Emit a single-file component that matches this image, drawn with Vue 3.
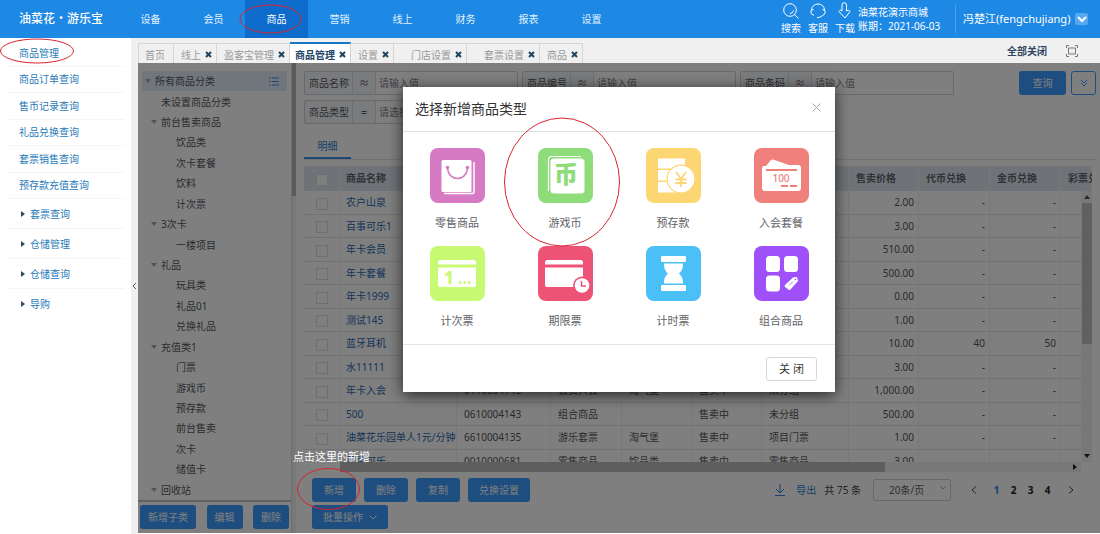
<script setup>
import { ref } from 'vue'

const navItems = ['设备', '会员', '商品', '营销', '线上', '财务', '报表', '设置']
const menuLinks = ['商品管理', '商品订单查询', '售币记录查询', '礼品兑换查询', '套票销售查询', '预存款充值查询']
const menuGroups = ['套票查询', '仓储管理', '仓储查询', '导购']

const tabs = [
  { name: '首页', fixed: true },
  { name: '线上' },
  { name: '盈客宝管理' },
  { name: '商品管理', active: true },
  { name: '设置' },
  { name: '门店设置', wide: true },
  { name: '套票设置', wide: true },
  { name: '商品' },
]

const tree = [
  { name: '所有商品分类', level: 0, open: true },
  { name: '未设置商品分类', level: 1 },
  { name: '前台售卖商品', level: 1, open: true },
  { name: '饮品类', level: 2 },
  { name: '次卡套餐', level: 2 },
  { name: '饮料', level: 2 },
  { name: '计次票', level: 2 },
  { name: '3次卡', level: 1, open: true },
  { name: '一楼项目', level: 2 },
  { name: '礼品', level: 1, open: true },
  { name: '玩具类', level: 2 },
  { name: '礼品01', level: 2 },
  { name: '兑换礼品', level: 2 },
  { name: '充值类1', level: 1, open: true },
  { name: '门票', level: 2 },
  { name: '游戏币', level: 2 },
  { name: '预存款', level: 2 },
  { name: '前台售卖', level: 2 },
  { name: '次卡', level: 2 },
  { name: '储值卡', level: 2 },
  { name: '回收站', level: 1, open: true },
]

const filters = [
  { id: 'f-name', label: '商品名称', op: '≈', hint: '请输入值' },
  { id: 'f-code', label: '商品编号', op: '≈', hint: '请输入值' },
  { id: 'f-bar', label: '商品条码', op: '≈', hint: '请输入值' },
  { id: 'f-type', label: '商品类型', op: '=', hint: '请选择' },
]

const columns = ['商品名称', '商品编号', '商品类型', '商品分类', '状态', '项目分组', '售卖价格', '代币兑换', '金币兑换', '彩票兑换']
const rows = [
  ['农户山泉', '0610004151', '零售商品', '饮品类', '售卖中', '未分组', '2.00', '-', '-'],
  ['百事可乐1', '0610004150', '零售商品', '饮品类', '售卖中', '未分组', '3.00', '-', '-'],
  ['年卡会员', '0610004149', '会员入会', '淘气堡', '售卖中', '未分组', '510.00', '-', '-'],
  ['年卡套餐', '0610004148', '会员入会', '淘气堡', '售卖中', '未分组', '500.00', '-', '-'],
  ['年卡1999', '0610004147', '会员入会', '淘气堡', '售卖中', '未分组', '0.00', '-', '-'],
  ['测试145', '0610004146', '零售商品', '饮品类', '售卖中', '未分组', '1.00', '-', '-'],
  ['蓝牙耳机', '0610004145', '零售商品', '礼品', '售卖中', '未分组', '10.00', '40', '50'],
  ['水11111', '0610004144', '零售商品', '饮品类', '售卖中', '未分组', '3.00', '-', '-'],
  ['年卡入会', '0110004145', '会员入会', '淘气堡', '售卖中', '未分组', '1,000.00', '-', '-'],
  ['500', '0610004143', '组合商品', '', '售卖中', '未分组', '500.00', '-', '-'],
  ['油菜花乐园单人1元/分钟', '6610004135', '游乐套票', '淘气堡', '售卖中', '项目门票', '1.00', '-', '-'],
  ['百事可乐', '0010000681', '零售商品', '饮品类', '售卖中', '零售商品', '3.00', '-', '-'],
]

const types = [
  { key: 'retail', name: '零售商品' },
  { key: 'coin', name: '游戏币' },
  { key: 'deposit', name: '预存款' },
  { key: 'member', name: '入会套餐' },
  { key: 'count', name: '计次票' },
  { key: 'period', name: '期限票' },
  { key: 'timer', name: '计时票' },
  { key: 'combo', name: '组合商品' },
]
const open = ref(true)
</script>

<template>
  <div class="page">
    <header class="top">
      <h1 class="brand">油菜花・游乐宝</h1>
      <nav class="nav">
        <a v-for="n in navItems" :key="n" href="#" :class="{ on: n === '商品' }">{{ n }}</a>
      </nav>
      <div class="tools">
        <button class="tool">
          <svg width="18" height="18" viewBox="0 0 18 18"><circle cx="8" cy="8" r="6.3" /><path d="M12.500 12.500l4 4M8 11.500a4 4 0 0 0 3.500-3" /></svg>
          <span>搜索</span>
        </button>
        <button class="tool">
          <svg width="18" height="18" viewBox="0 0 18 18"><path d="M2.500 8a6.500 6 0 0 1 13 0M4.500 7.500L2 8.500v3l3 2M13.500 7.500l2.500 1v3l-3 2.500-3 1.500H8" /></svg>
          <span>客服</span>
        </button>
        <button class="tool">
          <svg width="18" height="18" viewBox="0 0 18 18"><path d="M6 9V3a2 2 0 0 1 4.500 0v6l2-1 1.500 1.500-5 6.500-6-6.500L4.500 8z" /></svg>
          <span>下载</span>
        </button>
      </div>
      <div class="store"><span>油菜花演示商城</span><span>账期：2021-06-03</span></div>
      <div class="user">
        <span>冯楚江(fengchujiang)</span>
        <button class="drop" aria-label="用户菜单"><svg width="10" height="8" viewBox="0 0 10 8"><path d="M1 2l4 4 4-4" /></svg></button>
      </div>
    </header>

    <div class="body">
      <aside class="side">
        <ul class="links">
          <li v-for="m in menuLinks" :key="m"><a href="#">{{ m }}</a></li>
        </ul>
        <ul class="groups">
          <li v-for="m in menuGroups" :key="m"><i></i><a href="#">{{ m }}</a></li>
        </ul>
      </aside>
      <button class="fold" aria-label="收起菜单"><svg width="5" height="8" viewBox="0 0 5 8"><path d="M4 1L1 4l3 3" /></svg></button>

      <main class="main">
        <div class="tabbar">
          <div v-for="(t, i) in tabs" :key="i" class="tab" :class="{ on: t.active, wide: t.wide, fixed: t.fixed }">
            <a href="#">{{ t.name }}</a>
            <button v-if="!t.fixed" aria-label="关闭标签"><svg width="7" height="7" viewBox="0 0 7 7"><path d="M1 1l5 5M6 1L1 6" /></svg></button>
          </div>
          <button class="closeall">全部关闭</button>
          <button class="full" aria-label="全屏"><svg width="12" height="12" viewBox="0 0 12 12"><path d="M.5 3V.5H3M9 .5h2.500V3M11.500 9v2.500H9M3 11.500H.5V9M2.500 3h7v6h-7z" /></svg></button>
        </div>

        <div class="work">
          <section class="cats">
            <ul class="tree">
              <li v-for="(t, i) in tree" :key="i" :class="['lv' + t.level]">
                <i :class="{ caret: t.open }"></i><span>{{ t.name }}</span>
                <svg v-if="i === 0" class="list" width="10" height="9" viewBox="0 0 10 9"><path d="M0 1h1.500M3 1h7M0 4.500h1.500M3 4.500h7M0 8h1.500M3 8h7" /></svg>
              </li>
            </ul>
            <div class="catfoot">
              <button class="btn">新增子类</button><button class="btn">编辑</button><button class="btn">删除</button>
            </div>
          </section>
          <div class="rail"><i></i></div>

          <section class="goods">
            <div class="filters">
              <div class="fields">
                <div v-for="f in filters" :key="f.id" class="field">
                  <label :for="f.id">{{ f.label }}</label><span class="op">{{ f.op }}</span>
                  <input :id="f.id" type="text" :placeholder="f.hint" />
                </div>
              </div>
              <button class="btn query">查询</button>
              <button class="more" aria-label="更多条件"><svg width="8" height="8" viewBox="0 0 8 8"><path d="M1 1l3 3 3-3M1 4l3 3 3-3" /></svg></button>
            </div>

            <div class="subtabs"><a href="#">明细</a></div>

            <div class="grid">
              <div class="scroll">
                <table>
                  <colgroup>
                    <col class="c36" /><col class="c117" /><col class="c94" /><col class="c71" /><col class="c70" /><col class="c70" />
                    <col class="c87" /><col class="c70" /><col class="c71" /><col class="c71" /><col />
                  </colgroup>
                  <thead>
                    <tr>
                      <th><input type="checkbox" aria-label="全选" /></th>
                      <th v-for="c in columns" :key="c">{{ c }}</th>
                    </tr>
                  </thead>
                  <tbody>
                    <tr v-for="r in rows" :key="r[1]">
                      <td><input type="checkbox" :aria-label="r[0]" /></td>
                      <td v-for="(v, i) in r" :key="i" :class="{ link: i === 0, num: i > 5 }"><a v-if="i === 0" href="#">{{ v }}</a><template v-else>{{ v }}</template></td>
                      <td></td>
                    </tr>
                  </tbody>
                </table>
              </div>
              <div class="vbar"><i class="up"></i><b></b><i class="down"></i></div>
              <div class="hbar"><b></b><i></i></div>
            </div>

            <div class="foot">
              <div class="acts">
                <button class="btn">新增</button><button class="btn">删除</button><button class="btn">复制</button><button class="btn">兑换设置</button>
                <button class="btn batch">批量操作 <svg width="8" height="5" viewBox="0 0 8 5"><path d="M.5.5L4 4 7.500.5" /></svg></button>
              </div>
              <div class="pager">
                <a href="#" class="export"><svg width="10" height="12" viewBox="0 0 10 12"><path d="M5 0v9M1 5l4 4 4-4M0 11.500h10" /></svg>导出</a>
                <span class="total">共 75 条</span>
                <div class="size"><select aria-label="每页条数"><option>20条/页</option></select><svg width="6" height="4" viewBox="0 0 6 4"><path d="M.5.5L3 3 5.500.5" /></svg></div>
                <button class="arrow" aria-label="上一页"><svg width="6" height="8" viewBox="0 0 6 8"><path d="M5 .5L1 4l4 3.500" /></svg></button>
                <button v-for="p in 4" :key="p" class="num" :class="{ on: p === 1 }">{{ p }}</button>
                <button class="arrow" aria-label="下一页"><svg width="6" height="8" viewBox="0 0 6 8"><path d="M1 .5L5 4 1 7.500" /></svg></button>
              </div>
            </div>
          </section>

          <div v-if="open" class="mask">
            <div class="modal" role="dialog" aria-labelledby="dlg-title">
              <div class="mhead">
                <h2 id="dlg-title">选择新增商品类型</h2>
                <button aria-label="关闭" @click="open = false"><svg width="9" height="9" viewBox="0 0 9 9"><path d="M.5.5l8 8M8.500.5l-8 8" /></svg></button>
              </div>
              <div class="types">
                <button v-for="t in types" :key="t.key" class="type">
                  <svg width="55" height="55" viewBox="0 0 55 55">
                    <g v-if="t.key === 'retail'">
                      <rect width="55" height="55" rx="8" fill="#d67ac4" />
                      <path d="M13 12h27a1.500 1.500 0 0 1 1.500 1.500V43a1 1 0 0 1-1 1H13a1.500 1.500 0 0 1-1.500-1.500v-29A1.500 1.500 0 0 1 13 12z" fill="#fff" />
                      <path d="M14 45.500h28.500a1.500 1.500 0 0 0 1.500-1.500V14" fill="none" stroke="#fff" stroke-width="1.500" />
                      <path d="M17.500 20c1 14 19 14 20 0" fill="none" stroke="#d67ac4" stroke-width="1.500" />
                      <circle cx="17.500" cy="19.500" r="1.800" fill="#d67ac4" /><circle cx="37.500" cy="19.500" r="1.800" fill="#d67ac4" />
                    </g>
                    <g v-else-if="t.key === 'coin'">
                      <rect width="55" height="55" rx="8" fill="#8fdc7a" />
                      <path d="M10.500 43V11.500a3 3 0 0 1 3-3H43" fill="none" stroke="#fff" stroke-width="1.200" />
                      <rect x="12.500" y="10.500" width="34" height="35" rx="3.500" fill="#fff" />
                      <text x="28" y="35" text-anchor="middle" font-size="24" font-weight="900" fill="#8fdc7a">币</text>
                    </g>
                    <g v-else-if="t.key === 'deposit'">
                      <rect width="55" height="55" rx="8" fill="#fcd672" />
                      <path d="M12 10.500h27v10H12zM12 22h27v10.500H12zM12 34h27v10.500H12z" fill="#fff" />
                      <circle cx="35" cy="31" r="14.500" fill="#fcd672" /><circle cx="35" cy="31" r="13.300" fill="#fff" />
                      <path d="M30 24l5 7 5-7M35 31v8M29.500 31.500h11M29.500 35h11" fill="none" stroke="#fcd672" stroke-width="1.800" />
                    </g>
                    <g v-else-if="t.key === 'member'">
                      <rect width="55" height="55" rx="8" fill="#ef807c" />
                      <path d="M12 18l5-6a2 2 0 0 1 2-.5L35 17h9a3 3 0 0 1 3 3v20a3 3 0 0 1-3 3H11a3 3 0 0 1-3-3V20a2 2 0 0 1 2-2z" fill="#fff" />
                      <path d="M12 22h31M27 38h7M36 38h7" stroke="#ef807c" stroke-width="2.200" />
                      <text x="27" y="34" text-anchor="middle" font-size="10" font-weight="500" fill="#ef807c">100</text>
                    </g>
                    <g v-else-if="t.key === 'count'">
                      <rect width="55" height="55" rx="8" fill="#c8f973" />
                      <path d="M8 18.500v-2a2.500 2.500 0 0 1 2.500-2.500h33a2.500 2.500 0 0 1 2.500 2.500v2zM8 21.500h38V39a2 2 0 0 1-2 2H10a2 2 0 0 1-2-2z" fill="#fff" />
                      <text x="19" y="38" text-anchor="middle" font-size="17" font-weight="800" fill="#c8f973">1</text>
                      <path d="M29 36.500h2.500M33.500 36.500H36M38 36.500h2.500" stroke="#c8f973" stroke-width="2.500" />
                    </g>
                    <g v-else-if="t.key === 'period'">
                      <rect width="55" height="55" rx="8" fill="#ec5377" />
                      <path d="M7 18.500v-2A2.500 2.500 0 0 1 9.500 14h33a2.500 2.500 0 0 1 2.500 2.500v2zM7 21.500h38V41H9a2 2 0 0 1-2-2z" fill="#fff" />
                      <circle cx="44" cy="39.500" r="9" fill="#ec5377" /><circle cx="44" cy="39.500" r="7.300" fill="#fff" />
                      <path d="M43.500 35v5h4.500" fill="none" stroke="#ec5377" stroke-width="1.500" />
                    </g>
                    <g v-else-if="t.key === 'timer'">
                      <rect width="55" height="55" rx="8" fill="#4bc0f7" />
                      <path d="M16 10h23a1 1 0 0 1 1 1v4a1 1 0 0 1-1 1H16a1 1 0 0 1-1-1v-4a1 1 0 0 1 1-1zM16 39h23a1 1 0 0 1 1 1v4a1 1 0 0 1-1 1H16a1 1 0 0 1-1-1v-4a1 1 0 0 1 1-1zM18 17.500h19c0 5-1 7-4 10 3 3 4 5 4 10H18c0-5 1-7 4-10-3-3-4-5-4-10z" fill="#fff" />
                    </g>
                    <g v-else>
                      <rect width="55" height="55" rx="8" fill="#a050f8" />
                      <rect x="12" y="10" width="14" height="16" rx="3.500" fill="#fff" /><rect x="30" y="10" width="14" height="16" rx="3.500" fill="#fff" /><rect x="12" y="29.500" width="14" height="16" rx="3.500" fill="#fff" />
                      <path d="M31 39l8-7.500 4-.5 1 4-7.500 8.500a1.500 1.500 0 0 1-2.200 0L31 41a1.500 1.500 0 0 1 0-2z" fill="#fff" />
                      <path d="M35 39.500l4-4" stroke="#a050f8" stroke-width=".8" /><circle cx="41.500" cy="33.500" r=".8" fill="#a050f8" />
                    </g>
                  </svg>
                  <span>{{ t.name }}</span>
                </button>
              </div>
              <div class="mfoot"><button @click="open = false">关 闭</button></div>
            </div>
          </div>
        </div>
      </main>
    </div>

    <svg class="marks" width="640" height="530" viewBox="0 0 640 530">
      <ellipse cx="37" cy="51" rx="36.500" ry="12" /><ellipse cx="270.500" cy="19" rx="30.500" ry="14" />
      <ellipse cx="562" cy="182" rx="57.500" ry="64" /><ellipse cx="328.500" cy="489" rx="31" ry="20.500" />
      <text x="293" y="461">点击这里的新增</text>
    </svg>
  </div>
</template>

<style>
body { margin: 0; }
</style>

<style scoped>
.page, .page * { box-sizing: border-box; }
.page { position: relative; min-height: 100vh; display: flex; flex-direction: column; background: #fff; color: #55575b; font: 10px/16px "Noto Sans", "Noto Sans CJK SC", sans-serif; overflow: hidden; }
button, input, select { font: inherit; color: inherit; border: 0; margin: 0; padding: 0; background: none; }
button { cursor: pointer; white-space: nowrap; }
a { color: inherit; text-decoration: none; }
ul { list-style: none; margin: 0; padding: 0; }
svg { display: block; fill: none; stroke: currentColor; flex: none; }
svg text, .type svg { stroke: none; }

.top { display: flex; align-items: center; height: 38px; background: #1e88e5; color: #fff; }
.brand { width: 119px; margin: 0; padding-left: 19px; font-size: 12px; font-weight: 500; white-space: nowrap; }
.nav { display: flex; align-self: stretch; }
.nav a { width: 63px; display: flex; align-items: center; justify-content: center; color: #e3f2ff; }
.nav a.on { background: #0c6bcb; color: #fff; }
.tools { display: flex; gap: 7px; margin-left: auto; }
.tool { display: flex; flex-direction: column; align-items: center; width: 20px; }
.store { display: flex; flex-direction: column; width: 101px; padding-left: 3px; line-height: 14px; border-right: 1px solid #4ba3ee; white-space: nowrap; }
.user { display: flex; align-items: center; justify-content: space-between; width: 144px; padding: 0 12px 0 7px; font-size: 11px; white-space: nowrap; }
.drop { display: grid; place-items: center; width: 13px; height: 12px; background: #56a8f0; border-radius: 2px; }
.drop svg { stroke-width: 2; }

.body { flex: 1; display: flex; }
.side { width: 131px; background: #fff; color: #2679b8; }
.links { display: grid; grid-auto-rows: 1fr; height: 161px; padding-top: 2px; }
.side li { display: flex; align-items: center; margin: 0 6px 0 8px; padding-left: 11px; border-bottom: 1px solid #f3f5f7; }
.side .groups li { height: 30px; gap: 5px; }
.groups li:last-child { border-bottom: 0; }
.groups i { border: 3px solid transparent; border-left: 4px solid #2d4a5e; border-right: 0; margin-left: 2px; }
.fold { width: 7px; padding-left: 1px; background: #f0f0f0; color: #555; }
.main { flex: 1; min-width: 0; display: flex; flex-direction: column; }
.tabbar { display: flex; align-items: flex-end; height: 25px; padding-right: 22px; background: #f0f0f0; color: #999; }
.tab { display: flex; align-items: center; gap: 4px; height: 20px; padding: 2px 4px 0 7px; border: 1px solid #d5d5d5; border-width: 1px 1px 0 0; white-space: nowrap; }
.tab.fixed { padding: 2px 8px 0 6px; border-left-width: 1px; }
.tab.wide { padding-left: 17px; }
.tab.on { height: 21px; padding-left: 5px; background: #fff; color: #1d4567; font-weight: 700; border-top: 2px solid #1677c4; }
.tab button { color: #1d4560; }
.tab button svg { stroke-width: 2; }
.closeall { margin-left: auto; align-self: center; color: #2f4560; font-weight: 700; }
.full { align-self: center; margin-left: 19px; color: #777; }

.work { position: relative; flex: 1; display: flex; margin-bottom: 1px; background: #fff; }
.cats { width: 153px; display: flex; flex-direction: column; }
.tree { flex: 1; display: grid; grid-auto-rows: 1fr; padding: 8px 4px 0; }
.tree li { display: flex; align-items: center; gap: 4px; min-height: 0; }
.tree li i { width: 6px; border: 0 solid transparent; }
.tree li i.caret { border-width: 4px 3px 0; border-top-color: #a5a8ad; }
.tree .lv0 { padding-left: 3px; background: #e2ecfa; }
.tree .lv1 { padding-left: 9px; }
.tree .lv2 { padding-left: 24px; }
.list { margin: 0 8px 0 auto; color: #3a8ee6; }
.catfoot { display: flex; justify-content: space-between; padding: 3px 2px 4px; border-top: 2px solid #c4c4c4; }
.btn { height: 24px; padding: 0 7px; border-radius: 3px; background: #3d9bff; color: #fff; }
.catfoot .btn { padding: 0 8px; }
.rail { width: 5px; background: #f1f1f1; border-left: 1px solid #dcdcdc; }
.rail i { display: block; height: 133px; background: #b5b5b5; }

.goods { flex: 1; min-width: 0; display: flex; flex-direction: column; padding: 8px 4px 0 8px; }
.filters { display: flex; align-items: flex-start; gap: 5px; }
.fields { flex: 1; display: flex; flex-wrap: wrap; gap: 5px 4px; }
.field { display: flex; width: 214px; height: 24px; border: 1px solid #cfd3d9; border-radius: 2px; }
.field label { width: 47px; padding-left: 4px; line-height: 22px; background: #f5f7fa; white-space: nowrap; }
.op { width: 24px; text-align: center; line-height: 22px; border: 1px solid #dcdfe6; border-width: 0 1px; background: #f5f7fa; }
.field input { flex: 1; min-width: 0; padding-left: 3px; }
.field input::placeholder { color: #7a7f88; opacity: 1; }
.query { width: 47px; }
.more { width: 25px; height: 24px; display: grid; place-items: center; border: 1px solid #3d9bff; border-radius: 3px; color: #3d9bff; }
.subtabs { display: flex; height: 28px; margin: 8px 0 6px; border-bottom: 1px solid #dfe4ec; }
.subtabs a { width: 47px; line-height: 28px; text-align: center; color: #2b7fd0; border-bottom: 2px solid #3a8ee6; }

.grid { position: relative; margin-right: 4px; }
.scroll { height: 296px; overflow: hidden; }
table { width: 100%; min-width: 787px; height: 307px; table-layout: fixed; border-collapse: separate; border-spacing: 0; }
.c36 { width: 36px; } .c117 { width: 117px; } .c94 { width: 94px; } .c71 { width: 71px; } .c70 { width: 70px; } .c87 { width: 87px; }
th, td { padding: 0 4px 0 7px; text-align: left; white-space: nowrap; line-height: 14px; border-right: 1px solid #eef1f5; border-bottom: 1px solid #dfe4ec; }
th { height: 25px; background: #dfe6ee; font-weight: 700; color: #5f646c; }
td.num { text-align: right; }
th:nth-child(2), td.link { padding: 0 0 0 6px; }
td.link { color: #2a68b0; }
th:first-child, td:first-child { padding: 0; text-align: center; }
input[type=checkbox] { appearance: none; display: block; width: 12px; height: 12px; margin: 3px auto 0; border: 1px solid #dcdfe3; background: #fff; }
.vbar { position: absolute; top: 25px; right: 0; width: 11px; height: 271px; display: flex; flex-direction: column; justify-content: space-between; align-items: center; background: #f1f1f1; }
.vbar b { width: 10px; height: 141px; margin-bottom: auto; background: #c1c1c1; }
.vbar i { border: 3px solid transparent; border-top: 0; border-bottom: 4px solid #555; margin: 4px 0; }
.vbar .down { border-bottom: 0; border-top: 4px solid #222; }
.hbar { display: flex; align-items: center; justify-content: space-between; height: 10px; margin: 0 11px 0 36px; padding-right: 4px; background: #f1f1f1; }
.hbar b { width: 74%; height: 10px; background: #bcbcbc; }
.hbar i { border: 3px solid transparent; border-left: 4px solid #222; border-right: 0; }

.foot { display: flex; align-items: flex-start; justify-content: space-between; padding: 6px 18px 4px 8px; }
.acts { display: flex; flex-wrap: wrap; gap: 3px 8px; width: 260px; }
.acts .btn { min-width: 44px; padding: 0 11px; }
.acts .batch { display: flex; align-items: center; gap: 6px; }
.pager { display: flex; align-items: center; height: 23px; color: #45474b; }
.export { display: flex; align-items: center; gap: 11px; color: #2b7fd0; }
.total { margin: 0 12px 0 8px; }
.size { position: relative; width: 78px; margin-right: 16px; color: #606266; }
.size select { appearance: none; display: block; width: 100%; height: 22px; padding: 0 15px; border: 1px solid #cdd1d8; border-radius: 2px; }
.size svg { position: absolute; right: 5px; top: 7px; color: #aaa; }
.arrow { display: grid; place-items: center; width: 14px; height: 20px; }
.pager .num { width: 17px; font-weight: 700; color: #222; }
.arrow + .num { margin-left: 7px; }
.pager .num.on { color: #2b86e6; }
.num + .arrow { margin-left: 8px; }

.mask { position: absolute; inset: 0; display: flex; justify-content: center; align-items: flex-start; padding-top: 24px; background: rgba(0, 0, 0, .5); }
.modal { width: 432px; background: #fff; box-shadow: 0 3px 14px rgba(0, 0, 0, .7); }
.mhead { display: flex; justify-content: space-between; align-items: center; height: 45px; padding: 0 14px 0 12px; border-bottom: 1px solid #dcdee0; color: #333; }
.mhead h2 { margin: 0; font-size: 14px; font-weight: 400; line-height: 20px; }
.mhead button { color: #aaa; margin-bottom: 4px; }
.types { display: grid; grid-template-columns: repeat(4, 1fr); padding: 16px 0 10px; row-gap: 10px; }
.type { display: flex; flex-direction: column; align-items: center; gap: 12px; height: 88px; font-size: 11px; color: #606266; }
.mfoot { display: flex; justify-content: flex-end; padding: 12px 18px 11px; border-top: 1px solid #e3e5e7; }
.mfoot button { width: 51px; height: 24px; border: 1px solid #d5d8dd; border-radius: 3px; font-size: 11px; color: #333; }

.marks { position: absolute; left: 0; top: 0; pointer-events: none; stroke: #d8232f; }
.marks text { fill: #fff; font-size: 11px; }
</style>
